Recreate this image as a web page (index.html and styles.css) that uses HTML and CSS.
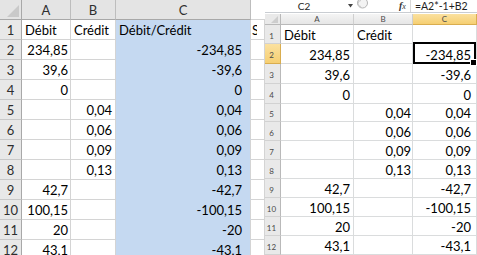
FILE: index.html
```html
<!DOCTYPE html>
<html lang="fr">
<head>
<meta charset="utf-8">
<title>Débit / Crédit</title>
<link rel="stylesheet" href="styles.css">
</head>
<body>
<div class="page">
  <div class="sheet left">
    <div class="corner"><svg width="21" height="19" viewBox="0 0 21 19"><polygon points="19,5 19,17 7,17" fill="#c9c9c9"/></svg></div>
    <div class="ch">A</div><div class="ch">B</div><div class="ch">C</div><div class="ch blank"></div>

    <div class="rh">1</div><div class="c">Débit</div><div class="c">Crédit</div><div class="c sel">Débit/Crédit</div><div class="c edge"><span class="clip">S</span></div>
    <div class="rh">2</div><div class="c num pa">234,85</div><div class="c"></div><div class="c sel num">-234,85</div><div class="c"></div>
    <div class="rh">3</div><div class="c num pa">39,6</div><div class="c"></div><div class="c sel num">-39,6</div><div class="c"></div>
    <div class="rh">4</div><div class="c num pa">0</div><div class="c"></div><div class="c sel num">0</div><div class="c"></div>
    <div class="rh">5</div><div class="c"></div><div class="c num pb">0,04</div><div class="c sel num">0,04</div><div class="c"></div>
    <div class="rh">6</div><div class="c"></div><div class="c num pb">0,06</div><div class="c sel num">0,06</div><div class="c"></div>
    <div class="rh">7</div><div class="c"></div><div class="c num pb">0,09</div><div class="c sel num">0,09</div><div class="c"></div>
    <div class="rh">8</div><div class="c"></div><div class="c num pb">0,13</div><div class="c sel num">0,13</div><div class="c"></div>
    <div class="rh">9</div><div class="c num pa">42,7</div><div class="c"></div><div class="c sel num">-42,7</div><div class="c"></div>
    <div class="rh">10</div><div class="c num pa">100,15</div><div class="c"></div><div class="c sel num">-100,15</div><div class="c"></div>
    <div class="rh">11</div><div class="c num pa">20</div><div class="c"></div><div class="c sel num">-20</div><div class="c"></div>
    <div class="rh">12</div><div class="c num pa">43,1</div><div class="c"></div><div class="c sel num">-43,1</div><div class="c"></div>
  </div>

  <div class="sheet right">
    <div class="fbar">
      <div class="namebox">C2</div>
      <svg class="drop" width="6" height="4" viewBox="0 0 6 4"><polygon points="0,0 5,0 2.5,3.5" fill="#444"/></svg>
      <svg class="btn" width="11" height="12" viewBox="0 0 11 12"><circle cx="5.5" cy="3" r="5" fill="#f3f3f3" stroke="#b4b4b4"/><path d="M4 0.5 A3 3 0 0 0 4 6.5" fill="none" stroke="#c9c9c9"/></svg>
      <div class="fx"><i>f</i><span class="fxx">x</span></div>
      <div class="fsep"></div>
      <div class="formula">=A2*-1+B2</div>
    </div>
    <div class="rgrid">
      <div class="corner2"><svg width="15" height="10" viewBox="0 0 15 10"><polygon points="13,2 13,9 6,9" fill="#cdcdcd"/></svg></div>
      <div class="rch">A</div><div class="rch">B</div><div class="rch hi">C</div>

      <div class="rrh">1</div><div class="rc">Débit</div><div class="rc">Crédit</div><div class="rc"></div>
      <div class="rrh hi">2</div><div class="rc num qa">234,85</div><div class="rc"></div><div class="rc num qc active">-234,85</div>
      <div class="rrh">3</div><div class="rc num qa">39,6</div><div class="rc"></div><div class="rc num qc">-39,6</div>
      <div class="rrh">4</div><div class="rc num qa">0</div><div class="rc"></div><div class="rc num qc">0</div>
      <div class="rrh">5</div><div class="rc"></div><div class="rc num qb">0,04</div><div class="rc num qc">0,04</div>
      <div class="rrh">6</div><div class="rc"></div><div class="rc num qb">0,06</div><div class="rc num qc">0,06</div>
      <div class="rrh">7</div><div class="rc"></div><div class="rc num qb">0,09</div><div class="rc num qc">0,09</div>
      <div class="rrh">8</div><div class="rc"></div><div class="rc num qb">0,13</div><div class="rc num qc">0,13</div>
      <div class="rrh">9</div><div class="rc num qa">42,7</div><div class="rc"></div><div class="rc num qc">-42,7</div>
      <div class="rrh">10</div><div class="rc num qa">100,15</div><div class="rc"></div><div class="rc num qc">-100,15</div>
      <div class="rrh">11</div><div class="rc num qa">20</div><div class="rc"></div><div class="rc num qc">-20</div>
      <div class="rrh">12</div><div class="rc num qa">43,1</div><div class="rc"></div><div class="rc num qc">-43,1</div>
    </div>
  </div>
</div>
</body>
</html>
```

FILE: styles.css
```css
* { box-sizing: border-box; }

body {
  margin: 0;
  background: #fff;
  font-family: Lato, "Open Sans", sans-serif;
  color: #000;
}

.page {
  display: flex;
  width: 477px;
  height: 255px;
  overflow: hidden;
}

/* ---------- left sheet ---------- */
.left {
  width: 265px;
  height: 255px;
  flex: none;
  overflow: hidden;
  display: grid;
  grid-template-columns: 22px 49px 45px 135px 14px;
  grid-auto-rows: 20px;
  align-content: start;
}

.left .corner {
  background: #e4e4e4;
  border-right: 1px solid #a8a8a8;
  border-bottom: 1px solid #a8a8a8;
}
.left .corner svg { display: block; }

.left .ch {
  background: #e4e4e4;
  border-right: 1px solid #bdbdbd;
  border-bottom: 1px solid #a8a8a8;
  display: flex;
  align-items: center;
  justify-content: center;
  font-size: 13px;
  color: #2e2e2e;
}
.left .ch.blank {
  background: #fff;
  border-right: none;
  border-bottom-color: #d4d4d4;
}

.left .rh {
  background: #e8e8e8;
  border-right: 1px solid #a8a8a8;
  border-bottom: 1px solid #c8c8c8;
  display: flex;
  align-items: flex-end;
  justify-content: center;
  padding-bottom: 1px;
  font-size: 13px;
  line-height: 15px;
  color: #2e2e2e;
}

.left .c {
  border-right: 1px solid #d4d4d4;
  border-bottom: 1px solid #d4d4d4;
  display: flex;
  align-items: flex-end;
  padding: 0 2px 1px 3px;
  font-size: 13px;
  line-height: 15px;
  white-space: nowrap;
  overflow: hidden;
}
.left .c.edge { padding-left: 1px; }
.left .clip {
  display: block;
  width: 5px;
  overflow: hidden;
}
.left .num { justify-content: flex-end; }
.left .pa { padding-right: 2px; }
.left .pb { padding-right: 3px; }
.left .sel {
  background: #c5d9f1;
  border-bottom-color: #c5d9f1;
}
.left .sel.num { padding-right: 8px; }

/* ---------- right sheet ---------- */
.right {
  width: 212px;
  height: 255px;
  flex: none;
  overflow: hidden;
  display: flex;
  flex-direction: column;
}

.fbar {
  height: 13px;
  flex: none;
  border-bottom: 1px solid #c9cdd2;
  display: flex;
  align-items: center;
  font-size: 10px;
  color: #1e1e1e;
  overflow: hidden;
}
.namebox {
  width: 78px;
  text-align: center;
  line-height: 12px;
}
.drop { margin-left: 5px; flex: none; }
.btn { margin-left: 3px; flex: none; align-self: flex-start; }
.fx {
  margin-left: 31px;
  font-family: "Liberation Serif", serif;
  font-size: 10px;
  line-height: 12px;
  color: #333;
}
.fx i { font-weight: bold; }
.fxx { font-size: 8px; font-style: italic; }
.fsep {
  margin-left: 4px;
  width: 1px;
  height: 12px;
  background: #d8d8d8;
}
.formula {
  margin-left: 4px;
  font-size: 10.5px;
  line-height: 12px;
  white-space: nowrap;
}

.rgrid {
  margin-top: 1px;
  display: grid;
  grid-template-columns: 16px 73px 59px 64px;
  grid-template-rows: 11px 19px 20px 20px 20px 18px 19px 19px;
  grid-auto-rows: 19px;
}

.corner2 {
  background: #e9e9e9;
  border-right: 1px solid #b9b9b9;
  border-bottom: 1px solid #b9b9b9;
}
.corner2 svg { display: block; }

.rch {
  background: linear-gradient(#f4f4f4, #e6e6e6);
  border-right: 1px solid #cfcfcf;
  border-bottom: 1px solid #b9b9b9;
  display: flex;
  align-items: center;
  justify-content: center;
  font-size: 8px;
  color: #4a4a4a;
}
.rrh {
  background: #e9e9e9;
  border-right: 1px solid #b9b9b9;
  border-bottom: 1px solid #d2d2d2;
  display: flex;
  align-items: center;
  justify-content: center;
  padding: 3px 2px 0 0;
  font-size: 8px;
  color: #4a4a4a;
}
.rch.hi, .rrh.hi {
  background: linear-gradient(#fbe1a0, #f6cf72);
  border-bottom-color: #d9ad4f;
  border-right-color: #d9ad4f;
}

.rc {
  border-right: 1px solid #dadcdd;
  border-bottom: 1px solid #dadcdd;
  display: flex;
  align-items: flex-end;
  padding: 0 3px 0 3px;
  font-size: 13px;
  line-height: 15px;
  white-space: nowrap;
}
.rc.num { justify-content: flex-end; }
.rc.qa { padding-right: 3px; }
.rc.qb { padding-right: 1px; }
.rc.qc { padding-right: 5px; }

.rc.active { position: relative; }
.rc.active::after {
  content: "";
  position: absolute;
  left: 0;
  top: -2px;
  right: 0;
  bottom: -1px;
  border: 2px solid #000;
}
.rc.active::before {
  content: "";
  position: absolute;
  right: -1px;
  bottom: -3px;
  width: 5px;
  height: 5px;
  background: #000;
  border: 1px solid #fff;
  z-index: 1;
}
```
